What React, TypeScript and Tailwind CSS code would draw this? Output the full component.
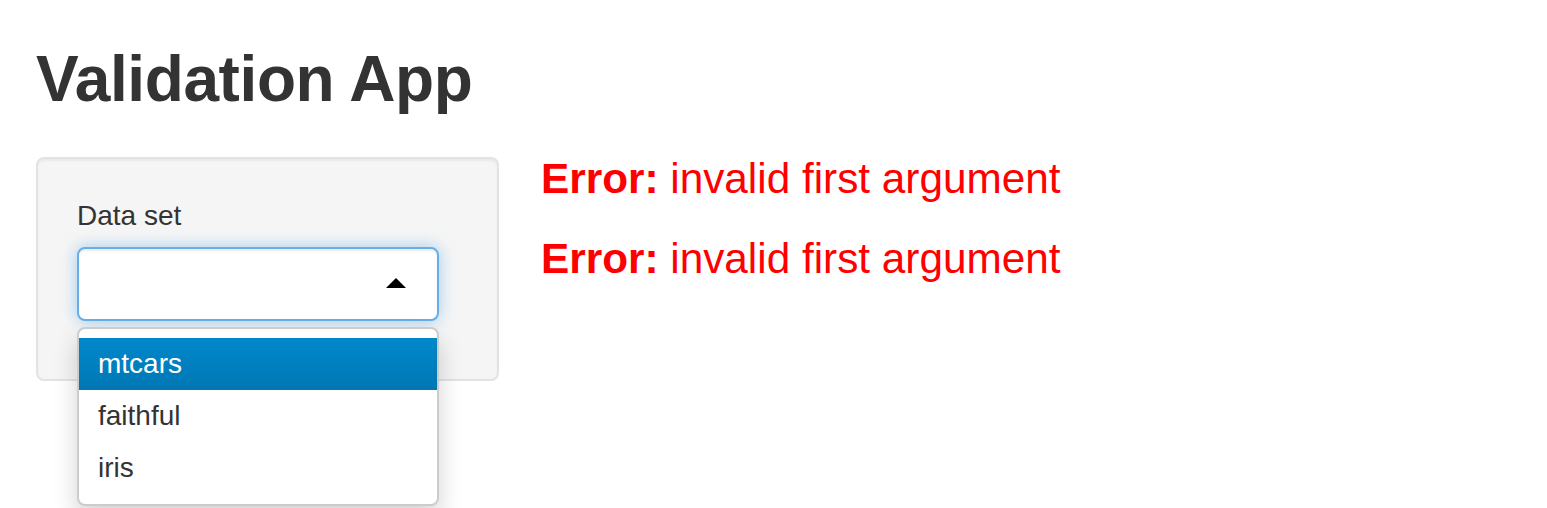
import React from "react";

const datasets = ["mtcars", "faithful", "iris"];

function DatasetSelect() {
  const active = "mtcars";
  return (
    <div className="relative w-[362px]">
      <div className="flex h-[74px] items-center justify-end rounded-[8px] border-2 border-[#66afe9] bg-white pr-[31px] shadow-[inset_0_2px_2px_rgba(0,0,0,0.075),0_0_16px_rgba(102,175,233,0.6)]">
        <svg width="20" height="10" viewBox="0 0 20 10" className="mt-[-2px]">
          <polygon points="10,0 20,10 0,10" fill="#000" />
        </svg>
      </div>
      <div className="absolute left-0 top-[80px] z-10 w-[362px] rounded-[8px] border-2 border-[#cccccc] bg-white pb-[10px] pt-[9px] shadow-[0_12px_24px_rgba(0,0,0,0.175)]">
        {datasets.map((d) => (
          <div
            key={d}
            className={
              d === active
                ? "h-[52px] bg-gradient-to-b from-[#0088cc] to-[#0077b3] px-[19px] text-[28px] leading-[52px] text-white"
                : "h-[52px] px-[19px] text-[28px] leading-[52px] text-[#333333]"
            }
          >
            {d}
          </div>
        ))}
      </div>
    </div>
  );
}

export default function App() {
  return (
    <div
      className="min-h-[508px] bg-white px-[36px]"
      style={{ fontFamily: '"Liberation Sans", Arial, sans-serif' }}
    >
      <h1 className="m-0 pt-[44px] text-[64px] font-bold leading-[1.1] tracking-[-0.4px] text-[#333333]">
        Validation App
      </h1>
      <div className="mt-[43px] flex items-start">
        <div className="w-[463px] rounded-[8px] border-2 border-[#e3e3e3] bg-[#f5f5f5] pb-[58px] pl-[39px] pt-[37px] shadow-[inset_0_2px_2px_rgba(0,0,0,0.05)]">
          <div className="text-[28px] leading-[40px] text-[#333333]">Data set</div>
          <div className="mt-[11px]">
            <DatasetSelect />
          </div>
        </div>
        <div className="ml-[42px] mt-[-2px] flex flex-col gap-[32px] text-[42.3px] leading-[48px] text-[#ff0000]">
          <div>
            <span className="font-bold">Error:</span> invalid first argument
          </div>
          <div>
            <span className="font-bold">Error:</span> invalid first argument
          </div>
        </div>
      </div>
    </div>
  );
}
